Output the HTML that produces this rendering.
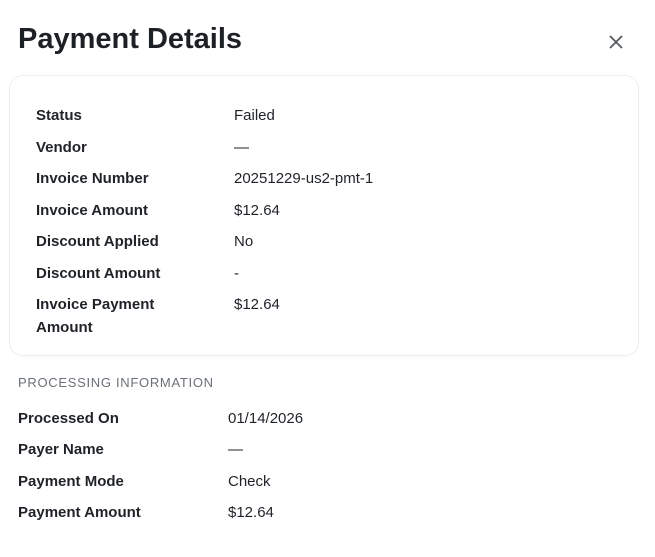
<!DOCTYPE html>
<html><head><meta charset="utf-8"><style>
body{margin:0;width:655px;height:557px;background:#fff;font-family:"Liberation Sans",sans-serif;color:#1f2328;position:relative;overflow:hidden}
.t{position:absolute;font-size:29px;font-weight:bold;left:18px;top:23px;letter-spacing:0px;color:#1d2125}
.card{position:absolute;left:9px;top:75px;width:628px;height:279px;border:1px solid #eceef0;border-radius:14px;box-shadow:0 1px 2px rgba(0,0,0,0.03)}
.r{position:absolute;font-size:15px;line-height:23px;white-space:nowrap}
.l{font-weight:bold;font-size:15px}
.h{position:absolute;left:18px;top:375px;font-size:13px;color:#6b7078;letter-spacing:0.7px}
</style></head><body>
<div class="t">Payment Details</div>
<svg style="position:absolute;left:608px;top:34px" width="16" height="16" viewBox="0 0 16 16"><path d="M2 2L14 14M14 2L2 14" stroke="#555a60" stroke-width="1.8" fill="none"/></svg>
<div class="card"></div>
<div class="r l" style="left:36px;top:104px">Status</div><div class="r" style="left:234px;top:104px">Failed</div>
<div class="r l" style="left:36px;top:136px">Vendor</div><div class="r" style="left:234px;top:136px">—</div>
<div class="r l" style="left:36px;top:167px">Invoice Number</div><div class="r" style="left:234px;top:167px">20251229-us2-pmt-1</div>
<div class="r l" style="left:36px;top:199px">Invoice Amount</div><div class="r" style="left:234px;top:199px">$12.64</div>
<div class="r l" style="left:36px;top:230px">Discount Applied</div><div class="r" style="left:234px;top:230px">No</div>
<div class="r l" style="left:36px;top:262px">Discount Amount</div><div class="r" style="left:234px;top:262px">-</div>
<div class="r l" style="left:36px;top:293px">Invoice Payment<br>Amount</div><div class="r" style="left:234px;top:293px">$12.64</div>
<div class="h">PROCESSING INFORMATION</div>
<div class="r l" style="left:18px;top:407px">Processed On</div><div class="r" style="left:228px;top:407px">01/14/2026</div>
<div class="r l" style="left:18px;top:438px">Payer Name</div><div class="r" style="left:228px;top:438px">—</div>
<div class="r l" style="left:18px;top:470px">Payment Mode</div><div class="r" style="left:228px;top:470px">Check</div>
<div class="r l" style="left:18px;top:501px">Payment Amount</div><div class="r" style="left:228px;top:501px">$12.64</div>
</body></html>
